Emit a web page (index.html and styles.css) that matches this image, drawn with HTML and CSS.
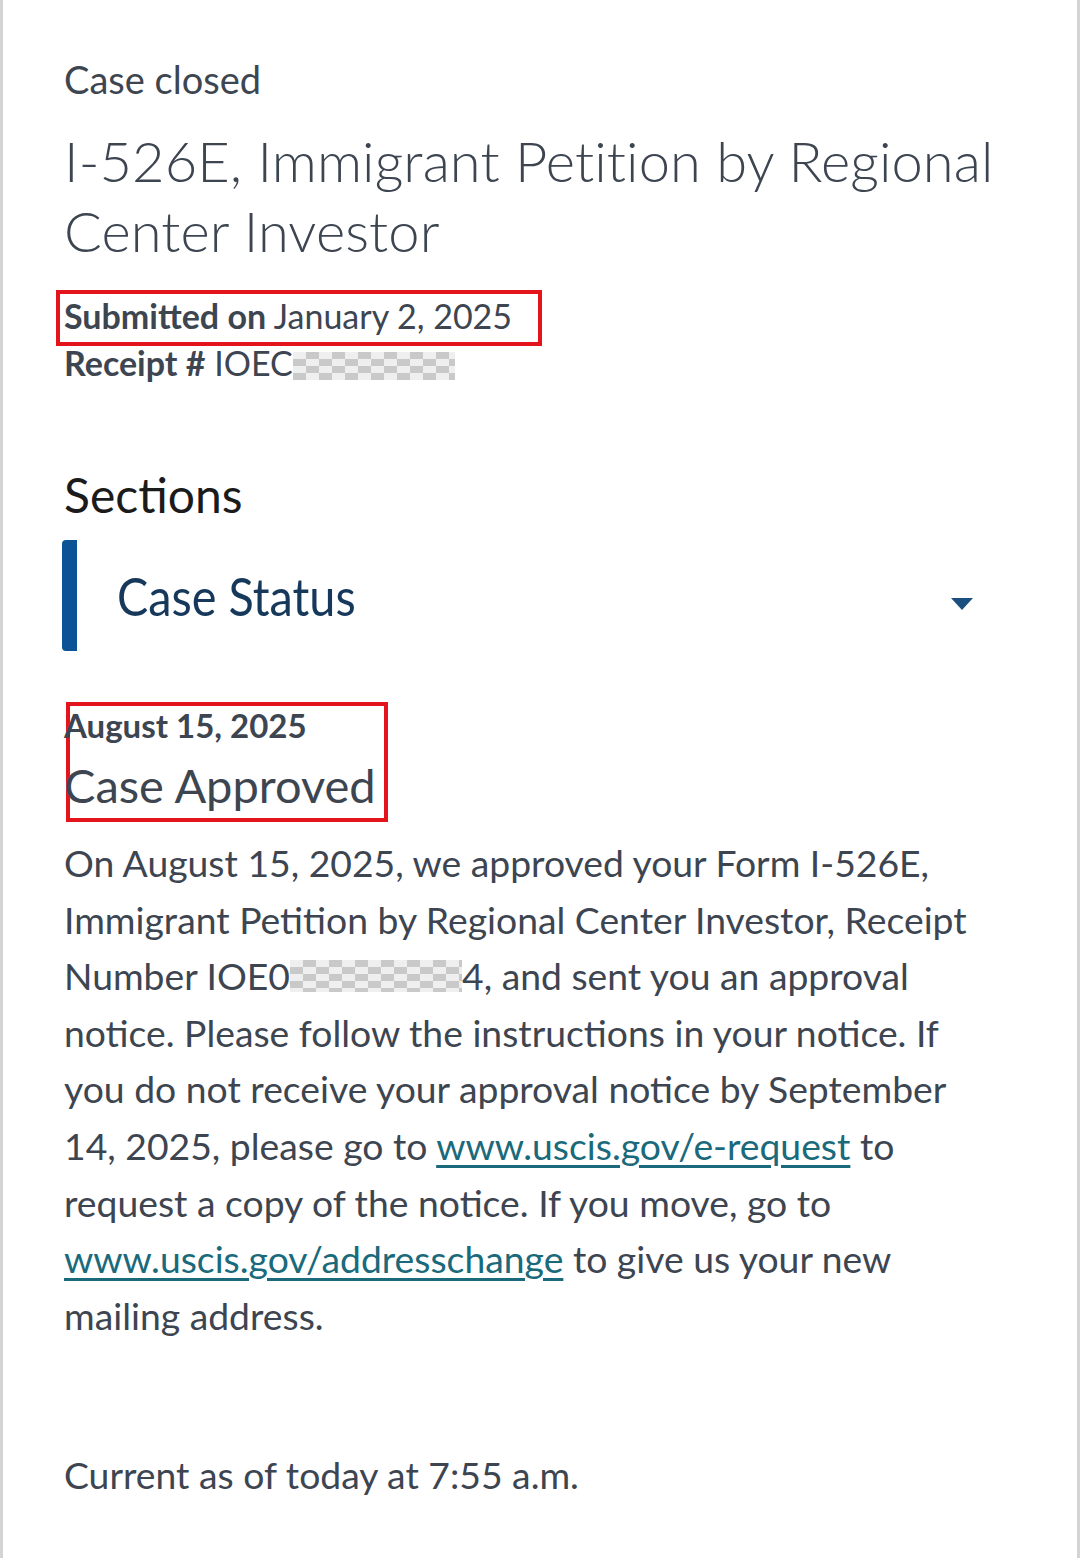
FILE: index.html
```html
<!DOCTYPE html>
<html lang="en">
<head>
    <meta charset="UTF-8">
    <meta name="viewport" content="width=device-width, initial-scale=1.0">
    <title>Case Status</title>
    <link rel="stylesheet" href="styles.css">
</head>
<body>
    <div class="page">
        <p class="case-state">Case closed</p>
        <h1 class="form-title">I-526E, Immigrant Petition by Regional<br>Center Investor</h1>
        <div class="meta">
            <p class="meta-line marked-submit"><strong>Submitted on</strong> January 2, 2025</p>
            <p class="meta-line receipt"><strong>Receipt #</strong> IOEC<span class="redact redact-receipt"></span></p>
        </div>

        <h2 class="sections">Sections</h2>
        <div class="accordion">
            <span class="accordion-title">Case Status</span>
            <svg class="caret" width="22" height="12" viewBox="0 0 22 12"><path d="M0 0 L22 0 L11 12 Z" fill="#1a4f80"/></svg>
        </div>

        <div class="status">
            <div class="marked-status">
                <p class="status-date">August 15, 2025</p>
                <p class="status-name">Case Approved</p>
            </div>
            <p class="status-text">On August 15, 2025, we approved your Form I-526E,<br>
                Immigrant Petition by Regional Center Investor, Receipt<br>
                Number IOE0<span class="redact redact-body"></span>4, and sent you an approval<br>
                notice. Please follow the instructions in your notice. If<br>
                you do not receive your approval notice by September<br>
                14, 2025, please go to <a href="#">www.uscis.gov/e-request</a> to<br>
                request a copy of the notice. If you move, go to<br>
                <a href="#">www.uscis.gov/addresschange</a> to give us your new<br>
                mailing address.</p>
        </div>

        <p class="current">Current as of today at 7:55 a.m.</p>
    </div>
</body>
</html>
```

FILE: styles.css
```css
body {
    margin: 0;
    background-color: white;
    font-family: Lato, "Open Sans", sans-serif;
    color: #3d4551;
}
p, h1, h2 {
    margin: 0;
}
.page {
    min-height: 1558px;
    box-sizing: border-box;
    border-left: 3px solid #d4d4d4;
    border-right: 3px solid #d4d4d4;
    padding: 52px 60px 0 61px;
}
.case-state {
    font-size: 38px;
    line-height: 54px;
}
.form-title {
    margin-top: 20px;
    font-size: 56px;
    font-weight: 300;
    letter-spacing: 0.1px;
    line-height: 70px;
    white-space: nowrap;
    color: #3d4551;
}
.meta {
    margin-top: 24px;
}
.meta-line {
    font-size: 34px;
    line-height: 44px;
}
.meta-line strong {
    font-weight: 700;
}
.marked-submit {
    display: inline-block;
    margin-left: -8px;
    padding: 0 26px 4px 4px;
    border: 4px solid #e3141b;
}
.receipt {
    line-height: 34px;
}
.redact {
    display: inline-block;
    vertical-align: -4px;
    height: 28px;
    background-color: #efefef;
    background-image: conic-gradient(#c9c9c9 25%, transparent 0 50%, #c9c9c9 0 75%, transparent 0);
    background-size: 26px 14px;
}
.redact-receipt {
    width: 162px;
}
.redact-body {
    width: 172px;
    height: 32px;
    vertical-align: -2px;
}
.sections {
    margin-top: 85px;
    font-size: 48px;
    font-weight: 400;
    line-height: 60px;
    color: #1b1b1b;
}
.accordion {
    margin: 15px 0 0 -2px;
    display: flex;
    align-items: center;
    justify-content: space-between;
    height: 111px;
    border-left: 15px solid #0b5394;
    border-radius: 4px;
    padding: 0 44px 0 40px;
}
.accordion-title {
    font-size: 52px;
    color: #16385a;
    transform: scaleX(0.9);
    transform-origin: left center;
}
.caret {
    margin-top: 16px;
}
.status {
    margin-top: 51px;
}
.marked-status {
    display: inline-block;
    border: 4px solid #e3141b;
    margin-left: 2px;
    padding: 0 8px 0 0;
}
.status-date {
    margin-left: -6px;
    font-size: 33px;
    font-weight: 700;
    line-height: 38px;
}
.status-name {
    margin: 8px 0 0 -6px;
    font-size: 47px;
    line-height: 66px;
}
.status-text {
    margin-top: 13px;
    font-size: 37.3px;
    line-height: 56.6px;
    white-space: nowrap;
}
.status-text a {
    color: #1a6a7b;
    text-decoration: underline;
    text-underline-offset: 5px;
}
.current {
    margin-top: 103px;
    font-size: 37.3px;
    line-height: 56px;
}
```
